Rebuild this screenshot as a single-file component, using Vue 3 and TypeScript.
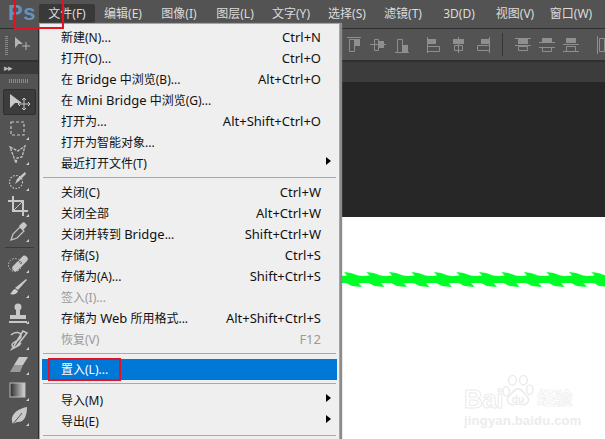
<script setup lang="ts">
interface Item { label?: string; key?: string; sub?: boolean; off?: boolean; active?: boolean; sep?: boolean }
const topMenus = ['编辑(E)', '图像(I)', '图层(L)', '文字(Y)', '选择(S)', '滤镜(T)', '3D(D)', '视图(V)', '窗口(W)']
const items: Item[] = [
  { label: '新建(N)...', key: 'Ctrl+N' },
  { label: '打开(O)...', key: 'Ctrl+O' },
  { label: '在 Bridge 中浏览(B)...', key: 'Alt+Ctrl+O' },
  { label: '在 Mini Bridge 中浏览(G)...' },
  { label: '打开为...', key: 'Alt+Shift+Ctrl+O' },
  { label: '打开为智能对象...' },
  { label: '最近打开文件(T)', sub: true },
  { sep: true },
  { label: '关闭(C)', key: 'Ctrl+W' },
  { label: '关闭全部', key: 'Alt+Ctrl+W' },
  { label: '关闭并转到 Bridge...', key: 'Shift+Ctrl+W' },
  { label: '存储(S)', key: 'Ctrl+S' },
  { label: '存储为(A)...', key: 'Shift+Ctrl+S' },
  { label: '签入(I)...', off: true },
  { label: '存储为 Web 所用格式...', key: 'Alt+Shift+Ctrl+S' },
  { label: '恢复(V)', key: 'F12', off: true },
  { sep: true },
  { label: '置入(L)...', active: true },
  { sep: true },
  { label: '导入(M)', sub: true },
  { label: '导出(E)', sub: true },
  { sep: true }
]
const parts = (s: string | undefined): string[] => (s ?? '').split(/(Mini Bridge|Bridge|Web)/)
const isLatin = (s: string): boolean => /^(Mini Bridge|Bridge|Web)$/.test(s)

const alignA = [
  { o: 'M4 3.5h14M6.5 5.5h5v12h-5z', f: 'M12 5h5v7h-5z' },
  { o: 'M3 10.5h16M7.5 5.5h4v11h-4z', f: 'M12 7h5v7h-5z' },
  { o: 'M4 18.5h14M6.5 5.5h5v13h-5z', f: 'M12 11h5v7h-5z' }
]
const alignB = [
  { o: 'M3.5 3v16M3.5 12.5h12v5h-12z', f: 'M4 5h8v5H4z' },
  { o: 'M10.5 3v16M6.5 11.5h8v5h-8z', f: 'M5 5h11v5H5z' },
  { o: 'M17.5 3v16M5.5 11.5h12v5h-12z', f: 'M9 5h8v5H9z' }
]
const alignC = [
  { o: 'M1 4.5h16M1 11.5h16M4.5 12.5h9v4h-9z', f: 'M4 5h10v5H4z' },
  { o: 'M1 8.5h16M1 13.5h16M4.5 13.5h9v4h-9z', f: 'M4 4h10v4H4z' },
  { o: 'M1 10.5h16M1 17.5h16M4.5 12.5h9v5h-9z', f: 'M4 4h10v5H4z' }
]
</script>

<template>
  <div class="app">
    <header class="menubar">
      <div class="logo">Ps</div>
      <div class="top active">文件(F)</div>
      <div v-for="m in topMenus" :key="m" class="top">{{ m }}</div>
    </header>

    <div class="workspace">
      <aside class="tools">
        <div class="tools-handle">
          <div class="handle-grip"></div>
          <svg width="17" height="15" viewBox="0 0 17 15"><path d="M1 1l8 7-4.500 0L1 12z" fill="#b4b4b4"/><path d="M12 6v8M8 10h8" stroke="#b4b4b4"/></svg>
        </div>
        <div class="tools-tab"><span class="arrows">▸▸</span></div>
        <div class="tools-grip"></div>
        <div class="tool selected">
          <svg width="26" height="20" viewBox="0 0 26 20"><path d="M4 2l12 9-7 0-5 5z" fill="#c8c8c8"/><path d="M18 6v12M12 12h12M16 8l2-2 2 2M16 16l2 2 2-2M14 10l-2 2 2 2M22 10l2 2-2 2" fill="none" stroke="#c8c8c8"/></svg>
        </div>
        <div class="tool">
          <svg width="24" height="24" viewBox="0 0 24 24"><rect x="4" y="4" width="13" height="13" fill="none" stroke="#c4c4c4" stroke-width="1.200" stroke-dasharray="3 2"/><path d="M22 19v3h-3z" fill="#d0d0d0"/></svg>
        </div>
        <div class="tool">
          <svg width="24" height="24" viewBox="0 0 24 24"><path d="M3 4l8 4 7-5-3 11-5 1-1 5-3-8z" fill="none" stroke="#c4c4c4" stroke-width="1.300" stroke-dasharray="3 1"/><path d="M22 19v3h-3z" fill="#d0d0d0"/></svg>
        </div>
        <div class="tool">
          <svg width="24" height="24" viewBox="0 0 24 24"><circle cx="9" cy="13" r="6.500" fill="none" stroke="#c4c4c4" stroke-width="1.200" stroke-dasharray="1.500 1.500"/><path d="M18 3l1 2-7 7-4 3 2-5z" fill="#c8c8c8"/><path d="M22 19v3h-3z" fill="#d0d0d0"/></svg>
        </div>
        <div class="tool">
          <svg width="24" height="24" viewBox="0 0 24 24"><path d="M6 1v15h15M1 6h15v15" fill="none" stroke="#c8c8c8" stroke-width="2"/><path d="M6 16L16 6" stroke="#c8c8c8"/><path d="M22 19v3h-3z" fill="#d0d0d0"/></svg>
        </div>
        <div class="tool">
          <svg width="24" height="24" viewBox="0 0 24 24"><path d="M4 20l2-6 7-7 4 4-7 7z" fill="none" stroke="#c8c8c8" stroke-width="1.200"/><path d="M12 6l3-3 2-1 3 3-1 2-3 3z" fill="#c8c8c8"/><path d="M22 19v3h-3z" fill="#d0d0d0"/></svg>
        </div>
        <div class="tool-sep"></div>
        <div class="tool">
          <svg width="24" height="24" viewBox="0 0 24 24"><circle cx="8" cy="14" r="6.500" fill="none" stroke="#c4c4c4" stroke-dasharray="1.500 1.500"/><path d="M6 15L15 6a3 3 0 015 4l-9 9a3 3 0 01-5-4z" fill="#c8c8c8"/><path d="M11 9l4 4" stroke="#555" stroke-width="2" stroke-dasharray="1 1"/><path d="M22 19v3h-3z" fill="#d0d0d0"/></svg>
        </div>
        <div class="tool">
          <svg width="24" height="24" viewBox="0 0 24 24"><path d="M19 3l1 1-9 10-3-2z" fill="#c8c8c8"/><path d="M8 13l3 2c-1 3-4 4-8 3 2-1 2-4 5-5z" fill="#d0d0d0"/><path d="M22 19v3h-3z" fill="#d0d0d0"/></svg>
        </div>
        <div class="tool">
          <svg width="24" height="24" viewBox="0 0 24 24"><circle cx="11" cy="5" r="3.500" fill="#c8c8c8"/><path d="M9 8h4v5h6v4H3v-4h6zM2 19h18v2H2z" fill="#c8c8c8"/><path d="M22 19v3h-3z" fill="#d0d0d0"/></svg>
        </div>
        <div class="tool">
          <svg width="24" height="24" viewBox="0 0 24 24"><path d="M4 7c4-4 10-3 10 1 0 5-9 5-9 9s7 2 9-2M16 3L7 18l-2 3 4-2L20 5z" fill="none" stroke="#c8c8c8" stroke-width="1.500"/><path d="M22 19v3h-3z" fill="#d0d0d0"/></svg>
        </div>
        <div class="tool">
          <svg width="24" height="24" viewBox="0 0 24 24"><path d="M12 4h9l-5 8H7z" fill="#c8c8c8"/><path d="M7 12h9l-3 7H3z" fill="#9a9a9a"/><path d="M22 19v3h-3z" fill="#d0d0d0"/></svg>
        </div>
        <div class="tool">
          <svg width="24" height="24" viewBox="0 0 24 24"><defs><linearGradient id="grad"><stop offset="0" stop-color="#2a2a2a"/><stop offset="1" stop-color="#d8d8d8"/></linearGradient></defs><rect x="3" y="4" width="15" height="14" fill="url(#grad)" stroke="#bbb"/><path d="M22 19v3h-3z" fill="#d0d0d0"/></svg>
        </div>
        <div class="tool">
          <svg width="24" height="24" viewBox="0 0 24 24"><path d="M6 20c-3-6 0-14 14-17 0 9-3 16-10 15z" fill="#c8c8c8"/><path d="M6 20l9-11" stroke="#555"/><path d="M22 19v3h-3z" fill="#d0d0d0"/></svg>
        </div>
      </aside>

      <main class="main">
        <div class="options">
          <div class="align-group">
            <svg v-for="(a, i) in alignA" :key="i" class="align" width="22" height="22" viewBox="0 0 22 22"><path :d="a.f" fill="#8f8f8f"/><path :d="a.o" fill="none" stroke="#8f8f8f"/></svg>
          </div>
          <div class="align-group second">
            <svg v-for="(a, i) in alignB" :key="i" class="align" width="22" height="22" viewBox="0 0 22 22"><path :d="a.f" fill="#8f8f8f"/><path :d="a.o" fill="none" stroke="#8f8f8f"/></svg>
          </div>
          <div class="divider"></div>
          <div class="align-group">
            <svg v-for="(a, i) in alignC" :key="i" class="align" width="22" height="22" viewBox="0 0 22 22"><path :d="a.f" fill="#8f8f8f"/><path :d="a.o" fill="none" stroke="#8f8f8f"/></svg>
          </div>
          <svg class="align cut" width="22" height="22" viewBox="0 0 22 22"><path d="M3.500 2v18M5.500 4.500h5v13h-5z" fill="none" stroke="#8f8f8f"/></svg>
        </div>
        <div class="tabs"></div>
        <div class="dark"></div>
        <div class="canvas">
          <svg class="stroke" width="265" height="26" viewBox="0 0 265 26">
            <defs>
              <pattern id="zig" width="22.500" height="26" patternUnits="userSpaceOnUse">
                <path d="M0 9L7 8.500 4 5l7 1 7 2.500 4.500.5v7h-4l3.500 4-10-1-6-3H0z" fill="#00ff26"/>
              </pattern>
            </defs>
            <rect width="265" height="26" fill="url(#zig)"/>
          </svg>
          <div class="watermark">
            <svg class="paw" width="36" height="36" viewBox="0 0 46 46">
              <g fill="none" stroke="#ececec" stroke-width="2">
                <ellipse cx="8" cy="22" rx="4" ry="6"/>
                <ellipse cx="16" cy="8" rx="5" ry="6"/>
                <ellipse cx="30" cy="8" rx="5" ry="6"/>
                <ellipse cx="38" cy="20" rx="4" ry="6"/>
                <path d="M23 19c-6 0-7 6-11 9-5 4-2 12 5 11 4-1 8-1 12 0 7 1 10-7 5-11-4-3-5-9-11-9z"/>
              </g>
              <text x="23" y="37" class="du" text-anchor="middle">du</text>
            </svg>
            <div class="wm-main"><span>Bai</span><span class="wm-cn">经验</span></div>
            <div class="wm-sub">jingyan.baidu.com</div>
          </div>
        </div>
      </main>
    </div>

    <div class="menu">
      <template v-for="(it, i) in items" :key="i">
        <div v-if="it.sep" class="sep"></div>
        <div v-else class="row" :class="{ off: it.off, active: it.active }">
          <span><span v-for="(p, j) in parts(it.label)" :key="j" :class="{ lat: isLatin(p) }">{{ p }}</span></span>
          <span class="key">{{ it.key }}</span>
          <i v-if="it.sub" class="arrow"></i>
        </div>
      </template>
    </div>

    <div class="mark mark-logo"></div>
    <div class="mark mark-place"></div>
  </div>
</template>

<style scoped>
.app {
  position: relative;
  width: 605px;
  height: 439px;
  overflow: hidden;
  background: #535353;
  font-family: "Noto Sans", "Noto Sans CJK SC", sans-serif;
  font-size: 12px;
  display: flex;
  flex-direction: column;
}
.menubar {
  height: 29px;
  flex: none;
  display: flex;
  align-items: flex-start;
  background: #535353;
  color: #dcdcdc;
  border-bottom: 1px solid #2f2f2f;
  box-sizing: border-box;
  white-space: nowrap;
}
.logo {
  width: 39px;
  flex: none;
  padding: 2px 0 0 8px;
  box-sizing: border-box;
  font: bold 22px/22px "Liberation Sans", sans-serif;
  letter-spacing: 0.5px;
  color: #6392bb;
}
.top {
  width: 56px;
  flex: none;
  text-align: center;
  line-height: 19px;
  font-size: 12px;
  margin-top: 4px;
  height: 19px;
}
.top.active {
  background: #393939;
  border-radius: 2px;
}
.workspace {
  flex: 1;
  display: flex;
  min-height: 0;
}
.tools {
  width: 39px;
  flex: none;
  background: #535353;
  display: flex;
  flex-direction: column;
  align-items: center;
  border-right: 1px solid #2c2c2c;
  box-sizing: border-box;
}
.tools-handle {
  height: 33px;
  flex: none;
  align-self: stretch;
  display: flex;
  align-items: flex-start;
  padding: 7px 0 0 5px;
  gap: 6px;
  box-sizing: border-box;
  border-bottom: 2px solid #303030;
}
.handle-grip {
  width: 3px;
  height: 20px;
  flex: none;
  background: repeating-linear-gradient(180deg, #8a8a8a 0 1px, #535353 1px 2px);
}
.tools-tab {
  align-self: stretch;
  height: 12px;
  flex: none;
  background: #3b3b3b;
  color: #bdbdbd;
  font-size: 9px;
  line-height: 12px;
  padding-left: 4px;
  margin-bottom: 5px;
  letter-spacing: -1px;
}
.tools-grip {
  width: 20px;
  height: 4px;
  flex: none;
  margin-bottom: 6px;
  background: repeating-linear-gradient(90deg, #8a8a8a 0 1px, #535353 1px 2px);
}
.tool {
  width: 31px;
  height: 25.6px;
  flex: none;
  display: flex;
  align-items: center;
  justify-content: center;
}
.tool.selected {
  height: 24px;
  background: #3c3c3c;
  border: 1px solid #2e2e2e;
  border-radius: 2px;
  margin-bottom: 2px;
}
.tool-sep {
  width: 29px;
  height: 1px;
  flex: none;
  margin: 2px 0;
  background: #3a3a3a;
}
.main {
  flex: 1;
  display: flex;
  flex-direction: column;
  min-width: 0;
}
.options {
  height: 33px;
  flex: none;
  display: flex;
  align-items: center;
  background: #535353;
  border-bottom: 2px solid #303030;
  box-sizing: border-box;
  overflow: hidden;
  padding-left: 304px;
}
.align-group {
  display: flex;
  gap: 2px;
  flex: none;
}
.align-group.second {
  margin-left: 11px;
}
.divider {
  width: 1px;
  height: 23px;
  flex: none;
  background: #353535;
  margin: 0 11px 0 8px;
}
.cut {
  margin-left: 10px;
}
.align {
  flex: none;
}
.tabs {
  height: 20px;
  flex: none;
  background: #3c3c3c;
}
.dark {
  height: 135px;
  flex: none;
  background: #272727;
}
.canvas {
  flex: 1;
  position: relative;
  background: #fff;
}
.stroke {
  position: absolute;
  right: 0;
  top: 50px;
}
.watermark {
  position: absolute;
  left: 425px;
  top: 169px;
  width: 108px;
  height: 50px;
  color: #fff;
}
.paw {
  position: absolute;
  left: 36px;
  top: -12px;
}
.du {
  font: bold 13px "Liberation Sans", sans-serif;
  fill: #ececec;
}
.wm-main {
  display: flex;
  justify-content: space-between;
  font: bold 26px/26px "Liberation Sans", "Noto Sans CJK SC", sans-serif;
  -webkit-text-stroke: 1px #ececec;
  letter-spacing: -0.5px;
}
.wm-cn {
  font-size: 18px;
  -webkit-text-stroke: 0.6px #ececec;
}
.wm-sub {
  font: bold 13px/14px "Liberation Sans", sans-serif;
  color: #ececec;
  margin-top: 2px;
  letter-spacing: 0.2px;
  white-space: nowrap;
}
.menu {
  position: absolute;
  left: 39px;
  top: 23px;
  width: 301px;
  height: 416px;
  box-sizing: border-box;
  background: #efefef;
  border: 1px solid #a5a5a5;
  border-bottom: 0;
  padding: 3px 2px 0;
  box-shadow: 2px 0 1px #8b8b8b;
  color: #111;
}
.row {
  position: relative;
  height: 21px;
  line-height: 21px;
  padding: 0 16px 0 19px;
  display: flex;
  justify-content: space-between;
  white-space: nowrap;
}
.lat {
  font-size: 13px;
}
.row.off {
  color: #9a9a9a;
}
.row.active {
  background: #0078d7;
  color: #fff;
  margin: 5px 0 3px;
}
.row.active + .sep {
  margin-bottom: 6px;
}
.key {
  font-size: 13px;
}
.arrow {
  position: absolute;
  right: 6px;
  top: 4px;
  border-left: 5px solid #000;
  border-top: 4px solid transparent;
  border-bottom: 4px solid transparent;
}
.sep {
  height: 1px;
  margin: 3px 1px 4px;
  background: #a9a9a9;
}
.mark {
  position: absolute;
  border: 2px solid #e81123;
  box-sizing: border-box;
}
.mark-logo {
  left: 14px;
  top: -2px;
  width: 50px;
  height: 31px;
}
.mark-place {
  left: 48px;
  top: 358px;
  width: 73px;
  height: 23px;
}
</style>
